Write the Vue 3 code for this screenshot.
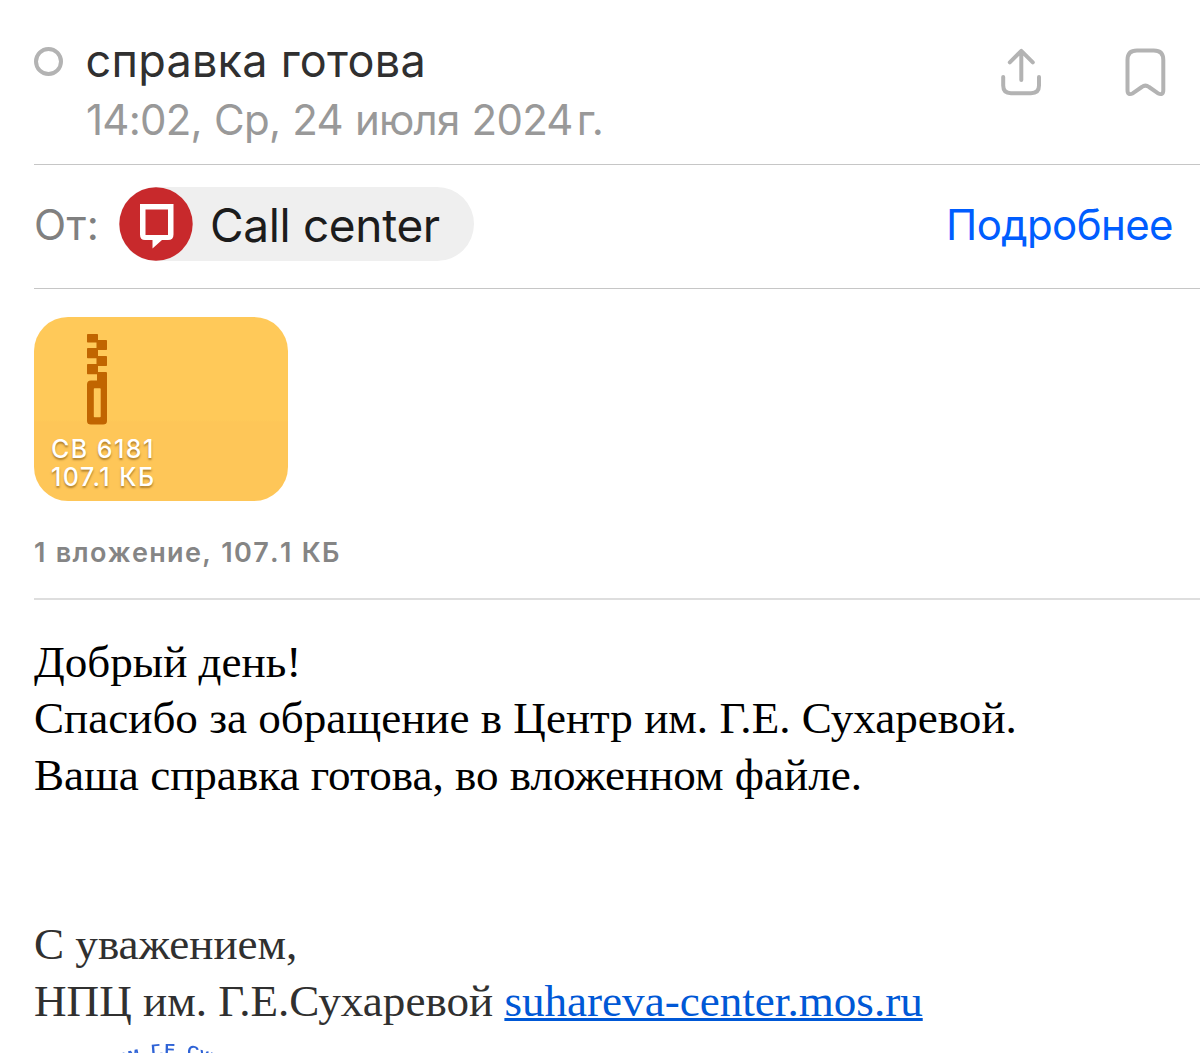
<template>
  <div class="mail">
    <header class="mail-header">
      <span class="unread-mark"></span>
      <div class="mail-title">
        <h1 class="subject">{{ mail.subject }}</h1>
        <div class="date">{{ mail.date }}<span class="year-mark">г.</span></div>
      </div>
      <div class="actions">
        <button class="icon-btn" aria-label="Поделиться">
          <svg width="44" height="52" viewBox="0 0 44 52" fill="none" stroke="#b3b3b3" stroke-width="4" stroke-linecap="round" stroke-linejoin="round">
            <path d="M22.3 33V4M10.8 15.3L22.3 3.8L33.8 15.3" />
            <path d="M4.2 30V38.5Q4.2 46.2 12 46.2H32Q40 46.2 40 38.5V30" />
          </svg>
        </button>
        <button class="icon-btn" aria-label="В закладки">
          <svg width="44" height="52" viewBox="0 0 44 52" fill="none" stroke="#b3b3b3" stroke-width="4" stroke-linejoin="round">
            <path d="M14 3.6H30.8Q40.3 3.6 40.3 13V43Q40.3 49 34.8 46.2L26 40Q22.4 37.2 18.8 40L10 46.2Q4.5 49 4.5 43V13Q4.5 3.6 14 3.6Z" />
          </svg>
        </button>
      </div>
    </header>

    <section class="sender">
      <span class="sender-label">От:</span>
      <div class="sender-chip">
        <svg class="avatar" width="74" height="74" viewBox="0 0 74 74">
          <circle cx="37" cy="37" r="36.7" fill="#c8292c" />
          <path fill="#fff" fill-rule="evenodd" d="M21 17H54.5V47.5Q54.5 53 49 53H43L33.5 61.5V53H26Q21 53 21 47.5ZM26.5 22.5H49V48H26.5Z" />
        </svg>
        <span class="sender-name">{{ mail.from }}</span>
      </div>
      <a class="details">Подробнее</a>
    </section>

    <section class="attachments">
      <div class="file-card">
        <svg class="zip" width="20" height="91" viewBox="0 0 20 91" fill="#c16500">
          <rect x="0" y="0" width="11" height="8.4" rx=".7" />
          <rect x="9.5" y="6" width="10.5" height="10" rx=".7" />
          <rect x="0" y="14" width="11" height="10.3" rx=".7" />
          <rect x="9.5" y="22" width="10.5" height="10" rx=".7" />
          <rect x="0" y="30" width="11" height="10.3" rx=".7" />
          <path fill-rule="evenodd" d="M10 38H19.3L20 38.7V87Q20 90.5 16 90.5H4Q0 90.5 0 87V50.5Q0 46.5 4 46.5H10ZM7.5 54.3Q6.8 54.3 6.8 55V82.5Q6.8 83.2 7.5 83.2H13Q13.7 83.2 13.7 82.5V55Q13.7 54.3 13 54.3Z" />
        </svg>
        <div class="file-info">
          <div class="file-name">{{ file.name }}</div>
          <div class="file-size">{{ file.size }}</div>
        </div>
      </div>
      <div class="attachments-count">1 вложение, {{ file.size }}</div>
    </section>

    <article class="mail-body">
      <p v-for="line in lines" :key="line" class="line">{{ line }}</p>
      <div class="signature">
        <p class="line">С уважением,</p>
        <p class="line">НПЦ им. Г.Е.Сухаревой <a class="site">suhareva-center.mos.ru</a></p>
      </div>
      <svg class="stamp" width="260" height="27" viewBox="0 0 260 27">
        <path id="stamp-arc" d="M14 117A120 90 0 0 1 254 117" fill="none" />
        <text class="stamp-text"><textPath href="#stamp-arc" startOffset="50%" text-anchor="middle">им. Г.Е. Сух</textPath></text>
      </svg>
    </article>
  </div>
</template>

<script setup>
import { ref } from 'vue';

const mail = ref({
  subject: 'справка готова',
  date: '14:02, Ср, 24 июля 2024',
  from: 'Call center'
});

const file = ref({ name: 'СВ 6181', size: '107.1 КБ' });

const lines = [
  'Добрый день!',
  'Спасибо за обращение в Центр им. Г.Е. Сухаревой.',
  'Ваша справка готова, во вложенном файле.'
];
</script>

<style>
body {
  margin: 0;
  background: #fff;
}
</style>

<style scoped>
.mail {
  width: 1200px;
  height: 1053px;
  overflow: hidden;
  box-sizing: border-box;
  padding-left: 34px;
  font-family: Inter, 'Liberation Sans', sans-serif;
  white-space: nowrap;
}

.mail-header {
  display: flex;
  height: 165px;
  box-sizing: border-box;
  border-bottom: 1px solid #c6c6c6;
}

.unread-mark {
  box-sizing: border-box;
  width: 29px;
  height: 29px;
  margin: 47px 22.5px 0 0;
  border: 4px solid #b3b3b3;
  border-radius: 50%;
}

.mail-title {
  padding-top: 32px;
}

.subject {
  margin: 0;
  font-size: 45px;
  font-weight: 400;
  line-height: 58px;
  letter-spacing: 0.25px;
  color: #303030;
}

.date {
  padding-left: 0.5px;
  font-size: 42px;
  line-height: 60px;
  letter-spacing: -0.76px;
  word-spacing: 1px;
  color: #999;
}

.year-mark {
  margin-left: 4px;
}

.actions {
  display: flex;
  gap: 80px;
  margin: 47px 33px 0 auto;
}

.icon-btn {
  display: block;
  width: 44px;
  height: 52px;
  padding: 0;
  border: none;
  background: none;
}

.sender {
  display: flex;
  align-items: center;
  height: 124px;
  box-sizing: border-box;
  padding: 0 27px 5px 0;
  border-bottom: 1px solid #c6c6c6;
}

.sender-label {
  width: 85px;
  font-size: 42px;
  letter-spacing: 0.5px;
  color: #808080;
}

.sender-chip {
  display: flex;
  align-items: center;
  width: 355px;
  height: 74px;
  border-radius: 37px;
  background: #efefef;
}

.avatar {
  flex: none;
  margin-right: 17px;
}

.sender-name {
  padding-top: 1px;
  font-size: 46px;
  letter-spacing: -0.35px;
  color: #1c1c1c;
}

.details {
  margin-left: auto;
  font-size: 42px;
  letter-spacing: -0.6px;
  color: #005dff;
}

.attachments {
  height: 311px;
  box-sizing: border-box;
  padding-top: 28px;
  border-bottom: 2px solid #dedede;
}

.file-card {
  display: flex;
  flex-direction: column;
  width: 254px;
  height: 183.5px;
  box-sizing: border-box;
  padding: 17px 0 0 17px;
  border-radius: 34px;
  background: linear-gradient(#ffc959 0 56%, #fec658 57%);
}

.zip {
  margin-left: 36px;
}

.file-info {
  margin-top: 10px;
  font-size: 25px;
  font-weight: 500;
  line-height: 28px;
  letter-spacing: 1.45px;
  color: #fff;
  text-shadow: 0 2px 2px rgba(100, 60, 0, 0.5);
}

.attachments-count {
  margin-top: 35.5px;
  font-size: 27px;
  font-weight: 600;
  line-height: 34px;
  letter-spacing: 1.35px;
  word-spacing: 0.8px;
  font-kerning: none;
  color: #858585;
}

.mail-body {
  padding-top: 34px;
  font-family: 'Liberation Serif', serif;
  font-size: 45.12px;
  color: #000;
}

.line {
  margin: 0;
  line-height: 56.4px;
}

.signature {
  margin-top: 113px;
  color: #303030;
}

.site {
  color: #0058d6;
  text-decoration: underline;
  text-decoration-thickness: 3px;
}

.stamp {
  display: block;
  margin-top: -1px;
}

.stamp-text {
  font-family: 'Liberation Sans', sans-serif;
  font-size: 16px;
  font-weight: 700;
  letter-spacing: 0.8px;
  fill: #2f63d6;
  filter: blur(0.7px);
}
</style>
